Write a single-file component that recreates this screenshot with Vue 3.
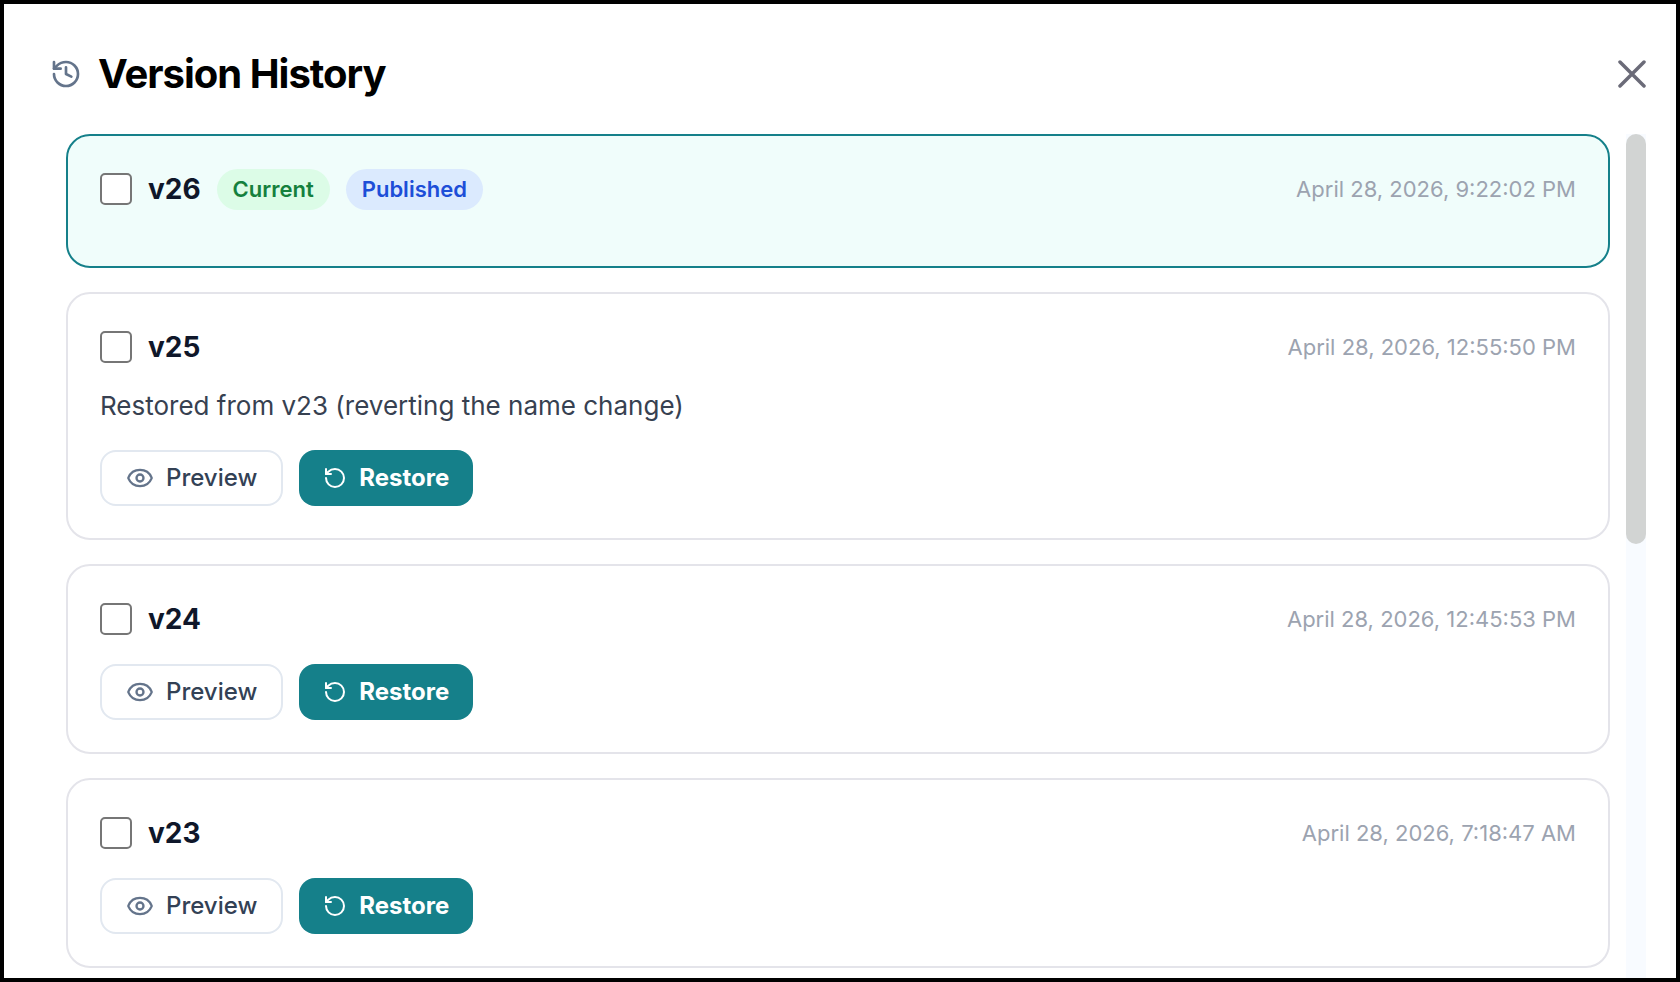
<script setup>
import { ref } from 'vue'

const selected = ref([])
const versions = [
  { id: 26, time: 'April 28, 2026, 9:22:02 PM', current: true, published: true },
  { id: 25, time: 'April 28, 2026, 12:55:50 PM', note: 'Restored from v23 (reverting the name change)' },
  { id: 24, time: 'April 28, 2026, 12:45:53 PM' },
  { id: 23, time: 'April 28, 2026, 7:18:47 AM' },
]
</script>

<template>
  <section class="dialog" role="dialog" aria-labelledby="dialog-title">
    <header class="header">
      <svg class="history" viewBox="0 0 24 24" aria-hidden="true">
        <path d="M3 12a9 9 0 1 0 9-9 9.75 9.75 0 0 0-6.74 2.74L3 8" />
        <path d="M3 3v5h5" />
        <path d="M12 7v5l4 2" />
      </svg>
      <h1 id="dialog-title" class="title">Version History</h1>
      <button class="close" type="button" aria-label="Close">
        <svg viewBox="0 0 28 28" aria-hidden="true">
          <path d="M2 2l24 24M26 2L2 26" />
        </svg>
      </button>
    </header>

    <div class="body">
      <ul class="list">
        <li v-for="v in versions" :key="v.id" class="card" :class="{ current: v.current }">
          <div class="row">
            <input :id="`v${v.id}`" v-model="selected" class="check" type="checkbox" :value="v.id" />
            <label class="name" :for="`v${v.id}`">v{{ v.id }}</label>
            <span v-if="v.current" class="pill green">Current</span>
            <span v-if="v.published" class="pill blue">Published</span>
            <time class="time">{{ v.time }}</time>
          </div>
          <p v-if="v.note" class="note">{{ v.note }}</p>
          <div class="actions">
            <template v-if="!v.current">
              <button class="btn preview" type="button">
                <svg class="eye" viewBox="0 0 24 24" aria-hidden="true">
                  <path d="M2.06 12.35a1 1 0 0 1 0-.7 10.75 10.75 0 0 1 19.88 0 1 1 0 0 1 0 .7 10.75 10.75 0 0 1-19.88 0" />
                  <circle cx="12" cy="12" r="3" />
                </svg>
                Preview
              </button>
              <button class="btn restore" type="button">
                <svg class="rotate" viewBox="0 0 24 24" aria-hidden="true">
                  <path d="M3 12a9 9 0 1 0 9-9 9.75 9.75 0 0 0-6.74 2.74L3 8" />
                  <path d="M3 3v5h5" />
                </svg>
                Restore
              </button>
            </template>
          </div>
        </li>
      </ul>
      <div class="track" aria-hidden="true"><div class="thumb"></div></div>
    </div>
  </section>
</template>

<style>
body {
  margin: 0;
  background: #fff;
}
</style>

<style scoped>
.dialog {
  box-sizing: border-box;
  height: 100vh;
  display: flex;
  flex-direction: column;
  overflow: hidden;
  border: 4px solid #000;
  padding-right: 30px;
  background: #fff;
  font-family: Inter, "Liberation Sans", sans-serif;
}
svg {
  display: block;
  flex: none;
  fill: none;
  stroke: currentColor;
  stroke-width: 2;
  stroke-linecap: round;
  stroke-linejoin: round;
}
.header {
  flex: none;
  display: flex;
  align-items: center;
  gap: 16px;
  padding: 40px 0 30px 46px;
}
.history {
  width: 32px;
  height: 32px;
  color: #64748b;
}
.title {
  margin: 0;
  font-size: 40px;
  line-height: 60px;
  font-weight: 700;
  letter-spacing: -0.025em;
  color: #000;
}
.close {
  margin-left: auto;
  padding: 0;
  border: 0;
  background: none;
  color: #6b6b78;
  cursor: pointer;
}
.close svg {
  width: 28px;
  height: 28px;
  stroke-width: 3.5;
}
.body {
  flex: 1;
  min-height: 0;
  display: flex;
  gap: 16px;
  padding-left: 62px;
}
.list {
  flex: 1;
  min-width: 0;
  display: flex;
  flex-direction: column;
  gap: 24px;
  margin: 0;
  padding: 0;
  list-style: none;
}
.card {
  flex: none;
  padding: 32px;
  border: 2px solid #e4e4ea;
  border-radius: 24px;
  background: #fff;
}
.card.current {
  border-color: #15808a;
  background: #f0fdfb;
}
.row {
  display: flex;
  align-items: center;
  gap: 16px;
  height: 42px;
}
.check {
  appearance: none;
  box-sizing: border-box;
  width: 32px;
  height: 32px;
  margin: 0;
  border: 2px solid #767676;
  border-radius: 5px;
  background: #fff;
}
.check:checked {
  background: #15808a;
}
.name {
  font-size: 28px;
  line-height: 40px;
  font-weight: 700;
  color: #0f172a;
}
.pill {
  padding: 4px 16px;
  border-radius: 24px;
  font-size: 22px;
  line-height: 33px;
  font-weight: 600;
}
.green {
  background: #dcfce7;
  color: #15803d;
}
.blue {
  background: #dbeafe;
  color: #1d4ed8;
}
.time {
  margin-left: auto;
  font-size: 22px;
  line-height: 32px;
  color: #9ca3b0;
}
.note {
  margin: 18px 0 0;
  font-size: 26px;
  line-height: 40px;
  color: #374151;
}
.actions {
  display: flex;
  gap: 16px;
  margin-top: 24px;
}
.btn {
  box-sizing: border-box;
  height: 56px;
  display: flex;
  align-items: center;
  gap: 12px;
  padding: 0 24px;
  border: 0;
  border-radius: 16px;
  font: inherit;
  font-size: 24px;
  line-height: 36px;
  cursor: pointer;
}
.preview {
  border: 2px solid #e2e8f0;
  background: #fff;
  color: #334155;
  font-weight: 500;
}
.restore {
  background: #15808a;
  color: #fff;
  font-weight: 700;
}
.eye {
  width: 28px;
  height: 28px;
  color: #64748b;
}
.rotate {
  width: 24px;
  height: 24px;
}
.track {
  flex: none;
  width: 20px;
  background: #f8fbff;
}
.thumb {
  height: 48.6%;
  border-radius: 10px;
  background: #d2d4d3;
}
</style>
